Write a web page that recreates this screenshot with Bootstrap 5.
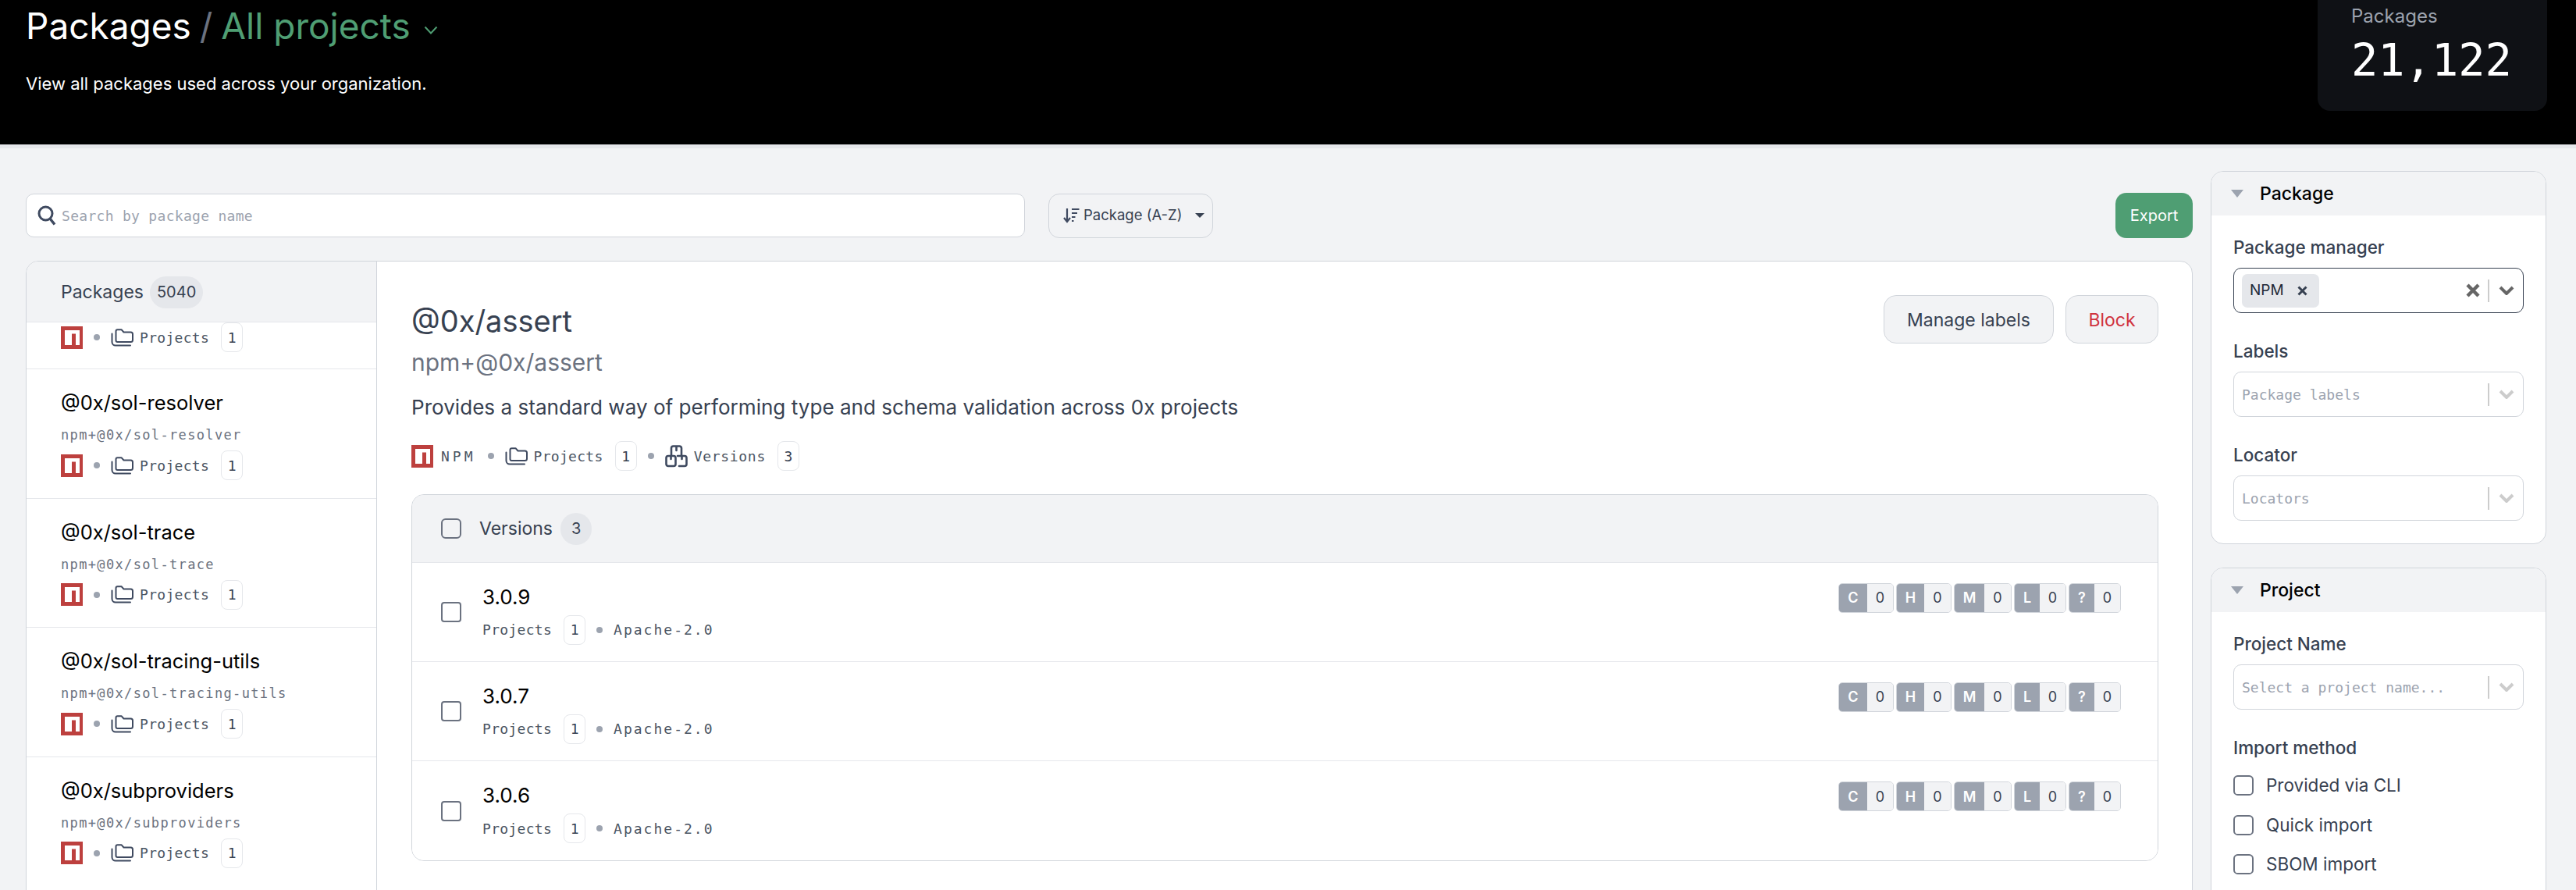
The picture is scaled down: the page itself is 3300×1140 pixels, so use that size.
<!doctype html>
<html lang="en">
<head>
<meta charset="utf-8">
<title>Packages</title>
<link href="https://cdn.jsdelivr.net/npm/bootstrap@5.3.0/dist/css/bootstrap.min.css" rel="stylesheet">
<style>
html,body{height:1140px;overflow:hidden}
body{background:#f2f3f5;font-family:Inter,"Liberation Sans",sans-serif;color:#374151}
.mono{font-family:"DejaVu Sans Mono",monospace;font-size:18px}
.top-band{height:190px;background:#000;border-bottom:5px solid #e5e7eb;padding:0 37px 0 33px}
.page-title{font-size:46px;line-height:66px;font-weight:400;color:#fff;margin:0}
.page-title .sep{color:#6b7280;margin:0 -2px}
.page-title .scope{color:#4f9e73}
.page-title svg{margin-left:17px;vertical-align:6px}
.page-sub{font-size:22px;line-height:32px;color:#fff;margin:25px 0 0}
.stat-box{width:294px;height:142px;background:#0f1115;border-radius:0 0 16px 16px;padding:2px 0 0 43px}
.stat-box .lbl{font-size:24px;line-height:38px;color:#9ca3af}
.stat-box .num{font-family:"DejaVu Sans Mono",monospace;font-size:57px;line-height:74px;color:#fff;font-weight:500}
.page-body{padding:0 38px 0 33px;gap:23px;height:950px;overflow:hidden}
.left-col{width:2776px;padding-top:57px}
.right-col{width:430px;padding-top:29px;gap:30px}
.toolbar{height:58px;margin-bottom:29px}
.search-box{width:1280px;height:56px;background:#fff;border:1px solid #d1d5db;border-radius:10px;padding-left:14px;gap:7px;color:#9ca3af;letter-spacing:.3px;margin-right:30px}
.sort-btn{height:57px;width:211px;background:#f2f3f5;border:1px solid #d1d5db;border-radius:14px;font-size:18.5px;color:#374151;padding:0 0 0 18px;gap:5px;display:flex;align-items:center}
.sort-btn::after{margin-left:12px;border-top-width:.35em;border-left-width:.35em;border-right-width:.35em;border-bottom:0}
.export-btn{height:58px;width:99px;background:#4f9e73;border:0;border-radius:14px;font-size:20px;color:#fff;padding:0}
.split{border:1px solid #d1d5db;border-radius:16px 16px 0 0;height:830px;overflow:hidden;background:#fff}
.pkg-list{width:449px;border-right:1px solid #d1d5db;flex-shrink:0}
.pkg-head{height:78px;background:#f2f3f5;border-bottom:1px solid #e5e7eb;padding:1px 0 0 44px;gap:8px;font-size:23px}
.count-pill{background:#e5e7eb;color:#374151;border-radius:21px;font-weight:400;font-size:20px;height:41px;padding:0 9px;display:inline-flex;align-items:center}
.pkg-row{height:165.67px;padding:26px 0 0 44px;border-color:#e5e7eb;border-width:0 0 1px;background:#fff}
.pkg-row.cut{height:60px;padding-top:0}
.pkg-row.cut .meta{margin-top:0}
.pkg-name{font-size:25.5px;line-height:34px;color:#000}
.pkg-id{color:#6b7280;font-size:17px;letter-spacing:1.35px;line-height:26px;margin-top:11px}
.meta{height:38px;gap:8px;color:#4b5563}
.pkg-row .meta{margin-top:7px}
.mini-count{width:28px;height:38px;border:1px solid #e5e7eb;border-radius:8px;display:inline-flex;align-items:center;justify-content:center;margin-left:7px;background:#fff;color:#374151;font-family:"DejaVu Sans Mono",monospace;font-size:18px}
.dotsep{width:8px;height:8px;border-radius:50%;background:#9ca3af;margin:0 6px;flex-shrink:0}
.lsp{letter-spacing:.3px}
.lsv{letter-spacing:.7px}
.lsn{letter-spacing:4px;margin-left:2px;margin-right:1px}
.detail{padding:0 43px 0 44px;min-width:0;flex:1}
.detail-top{padding-top:43px;height:149px}
.detail-name{font-size:38px;line-height:66px;color:#374151;font-weight:400;margin:0}
.detail-id{font-size:30px;line-height:40px;color:#6b7280}
.detail-actions{gap:15px}
.ghost-btn{height:62px;background:#f2f3f5;border:1px solid #d1d5db;border-radius:16px;font-size:23px;color:#374151;padding:2px 0 0;display:flex;align-items:center;justify-content:center}
.ghost-btn.w1{width:218px}
.ghost-btn.w2{width:119px;color:#d0333e}
.detail-desc{font-size:26.1px;line-height:36px;margin:20px 0 25px}
.vers-card{margin-top:30px;border:1px solid #d1d5db;border-radius:16px;overflow:hidden;background:#fff}
.vers-head{height:87px;background:#f2f3f5;border-bottom:1px solid #e5e7eb;padding-left:37px;font-size:23px}
.box{width:26px;height:26px;border:2px solid #6b7280;border-radius:4px;margin:0;flex-shrink:0;background-color:#fff}
.vers-head .box{margin-right:23px;background-color:#f2f3f5}
.vers-head .count-pill{margin-left:10px;padding:0 14px}
.vers-row{height:127px;border-color:#e5e7eb;border-width:0 0 1px;padding:0 47px 0 37px}
.vers-row:last-child{border-bottom:0}
.vers-row .box{margin-right:27px}
.vers-info{padding-top:4px}
.vers-no{font-size:26px;line-height:36px;color:#000}
.vers-row .meta{margin-top:5px}
.lic{letter-spacing:2px}
.sev-set{gap:3px;margin-top:-37px}
.sev{height:38px;border:1px solid #d1d5db;border-radius:5px;overflow:hidden;font-size:18px}
.sev b{background:#9ca3af;color:#fff;font-weight:600;display:flex;align-items:center;justify-content:center;height:100%}
.sev span{background:#f2f3f5;display:flex;align-items:center;justify-content:center;height:100%;flex:1;color:#374151}
.sev-c{width:71px}.sev-c b{width:36px}
.sev-h{width:71px}.sev-h b{width:35px}
.sev-m{width:74px}.sev-m b{width:38px}
.sev-l{width:67px}.sev-l b{width:32px}
.filter{border:1px solid #d1d5db;border-radius:16px;background:#fff;overflow:hidden;flex-shrink:0}
.filter-head{height:56px;padding-left:25px;background:#f2f3f5;border:0;border-radius:0;font-size:23px;font-weight:500;color:#000;gap:21px}
.filter-body{padding:24px 28px 29px}
.filter-label{font-size:22.5px;font-weight:500;line-height:34px;margin:0 0 9px;color:#374151}
.picker{height:58px;border:1px solid #d1d5db;border-radius:10px;padding:0 11px 0 10px;margin-bottom:32px;color:#9ca3af;background:#fff}
.picker.on{border-color:#374151}
.picker .ph{flex:1;white-space:nowrap}
.picker-sep{width:2px;height:29px;background:#ccc;margin:0 12px 0 10px}
.chip{height:43px;width:99px;background:#e5e7eb;border-radius:7px;font-size:19px;color:#1f2937;padding-left:10px;gap:17px}
.spacer{flex:1}
.check-list{margin-top:-3px}
.check-row{height:50.5px;font-size:22.5px;gap:16px;margin:0}
</style>
</head>
<body>
<svg width="0" height="0" class="position-absolute">
<symbol id="npm" viewBox="0 0 28 29"><rect width="28" height="29" fill="#bd403e"/><rect x="5" y="5" width="19" height="19" fill="#fff"/><rect x="14" y="9.5" width="5" height="14.5" fill="#bd403e"/></symbol>
<symbol id="folder" viewBox="0 0 29 23"><g fill="none" stroke="#3f4a60" stroke-width="2" stroke-linejoin="round" stroke-linecap="round"><path d="M6.5 3.2a2 2 0 0 1 2-2h5l3 3.3h9a2.5 2.5 0 0 1 2.5 2.5v7.5a2.5 2.5 0 0 1-2.5 2.500H8.500a2 2 0 0 1-2-2z"/><path d="M1.500 6.500V17a4.500 4.500 0 0 0 4.500 4.500h19"/></g></symbol>
<symbol id="boxes" viewBox="0 0 29 29"><g fill="none" stroke="#3f4a60" stroke-width="2.600" stroke-linejoin="round" stroke-linecap="round"><path d="M8 13V4a2.500 2.500 0 0 1 2.500-2.500h8A2.500 2.500 0 0 1 21 4v9M14.500 2v5"/><rect x="1.500" y="14" width="12" height="13" rx="2.500"/><path d="M16 14h9a2.500 2.500 0 0 1 2.500 2.500v8A2.500 2.500 0 0 1 25 27h-7M7.500 14v4M21.500 14v4"/></g></symbol>
<symbol id="chev" viewBox="0 0 20 12"><path d="M2 2l8 8 8-8" fill="none" stroke="currentColor" stroke-width="4"/></symbol>
</svg>

<header class="top-band d-flex justify-content-between">
  <div>
    <h1 class="page-title">Packages<span class="sep"> / </span><span class="scope">All projects</span><svg width="18" height="11" viewBox="0 0 18 11"><path d="M1.500 1.500L9 9.500l7.500-8" fill="none" stroke="#4f9e73" stroke-width="2"/></svg></h1>
    <p class="page-sub">View all packages used across your organization.</p>
  </div>
  <div class="stat-box">
    <div class="lbl">Packages</div>
    <div class="num">21,122</div>
  </div>
</header>

<main class="page-body d-flex">
  <div class="left-col">
    <div class="toolbar d-flex align-items-center">
      <div class="search-box d-flex align-items-center mono">
        <svg width="24" height="26" viewBox="0 0 24 26"><circle cx="10.500" cy="10.500" r="8.500" fill="none" stroke="#3f4a60" stroke-width="3"/><path d="M16 17l6 7.500" stroke="#3f4a60" stroke-width="3.500" fill="none"/></svg>
        <span>Search by package name</span>
      </div>
      <button type="button" class="btn sort-btn dropdown-toggle">
        <svg width="21" height="20" viewBox="0 0 21 20"><path d="M5 1v16M1 13l4 5 4-5" fill="none" stroke="#3f4a60" stroke-width="2.200"/><path d="M11 2h9.500M11 7h7M11 12h4.500M11 17h2.500" stroke="#3f4a60" stroke-width="2.200"/></svg>
        <span>Package (A-Z)</span>
      </button>
      <div class="spacer"></div>
      <button type="button" class="btn export-btn">Export</button>
    </div>

    <div class="split d-flex">
      <section class="pkg-list">
        <div class="pkg-head d-flex align-items-center"><span>Packages</span><span class="count-pill">5040</span></div>
        <div class="list-group list-group-flush">
          <div class="list-group-item pkg-row cut">
            <div class="meta d-flex align-items-center mono"><svg width="28" height="29"><use href="#npm"/></svg><span class="dotsep"></span><svg width="29" height="23"><use href="#folder"/></svg><span class="lsp">Projects</span><span class="mini-count">1</span></div>
          </div>
          <div class="list-group-item pkg-row">
            <div class="pkg-name">@0x/sol-resolver</div>
            <div class="pkg-id mono">npm+@0x/sol-resolver</div>
            <div class="meta d-flex align-items-center mono"><svg width="28" height="29"><use href="#npm"/></svg><span class="dotsep"></span><svg width="29" height="23"><use href="#folder"/></svg><span class="lsp">Projects</span><span class="mini-count">1</span></div>
          </div>
          <div class="list-group-item pkg-row">
            <div class="pkg-name">@0x/sol-trace</div>
            <div class="pkg-id mono">npm+@0x/sol-trace</div>
            <div class="meta d-flex align-items-center mono"><svg width="28" height="29"><use href="#npm"/></svg><span class="dotsep"></span><svg width="29" height="23"><use href="#folder"/></svg><span class="lsp">Projects</span><span class="mini-count">1</span></div>
          </div>
          <div class="list-group-item pkg-row">
            <div class="pkg-name">@0x/sol-tracing-utils</div>
            <div class="pkg-id mono">npm+@0x/sol-tracing-utils</div>
            <div class="meta d-flex align-items-center mono"><svg width="28" height="29"><use href="#npm"/></svg><span class="dotsep"></span><svg width="29" height="23"><use href="#folder"/></svg><span class="lsp">Projects</span><span class="mini-count">1</span></div>
          </div>
          <div class="list-group-item pkg-row">
            <div class="pkg-name">@0x/subproviders</div>
            <div class="pkg-id mono">npm+@0x/subproviders</div>
            <div class="meta d-flex align-items-center mono"><svg width="28" height="29"><use href="#npm"/></svg><span class="dotsep"></span><svg width="29" height="23"><use href="#folder"/></svg><span class="lsp">Projects</span><span class="mini-count">1</span></div>
          </div>
        </div>
      </section>

      <section class="detail">
        <div class="detail-top d-flex justify-content-between">
          <div>
            <h2 class="detail-name">@0x/assert</h2>
            <div class="detail-id">npm+@0x/assert</div>
          </div>
          <div class="detail-actions d-flex">
            <button type="button" class="btn ghost-btn w1">Manage labels</button>
            <button type="button" class="btn ghost-btn w2">Block</button>
          </div>
        </div>
        <p class="detail-desc">Provides a standard way of performing type and schema validation across 0x projects</p>
        <div class="meta d-flex align-items-center mono">
          <svg width="28" height="29"><use href="#npm"/></svg><span class="lsn">NPM</span><span class="dotsep"></span><svg width="29" height="23"><use href="#folder"/></svg><span class="lsp">Projects</span><span class="mini-count">1</span><span class="dotsep"></span><svg width="29" height="29"><use href="#boxes"/></svg><span class="lsv">Versions</span><span class="mini-count">3</span>
        </div>
        <div class="vers-card">
          <div class="vers-head d-flex align-items-center"><input class="form-check-input box" type="checkbox" aria-label="Select all"><span>Versions</span><span class="count-pill">3</span></div>
          <div class="list-group list-group-flush">
            <div class="list-group-item vers-row d-flex align-items-center">
              <input class="form-check-input box" type="checkbox" aria-label="3.0.9">
              <div class="vers-info flex-grow-1"><div class="vers-no">3.0.9</div><div class="meta d-flex align-items-center mono"><span class="lsp">Projects</span><span class="mini-count">1</span><span class="dotsep"></span><span class="lic">Apache-2.0</span></div></div>
              <div class="sev-set d-flex"><div class="sev sev-c d-flex align-items-center"><b>C</b><span>0</span></div><div class="sev sev-h d-flex align-items-center"><b>H</b><span>0</span></div><div class="sev sev-m d-flex align-items-center"><b>M</b><span>0</span></div><div class="sev sev-l d-flex align-items-center"><b>L</b><span>0</span></div><div class="sev sev-l d-flex align-items-center"><b>?</b><span>0</span></div></div>
            </div>
            <div class="list-group-item vers-row d-flex align-items-center">
              <input class="form-check-input box" type="checkbox" aria-label="3.0.7">
              <div class="vers-info flex-grow-1"><div class="vers-no">3.0.7</div><div class="meta d-flex align-items-center mono"><span class="lsp">Projects</span><span class="mini-count">1</span><span class="dotsep"></span><span class="lic">Apache-2.0</span></div></div>
              <div class="sev-set d-flex"><div class="sev sev-c d-flex align-items-center"><b>C</b><span>0</span></div><div class="sev sev-h d-flex align-items-center"><b>H</b><span>0</span></div><div class="sev sev-m d-flex align-items-center"><b>M</b><span>0</span></div><div class="sev sev-l d-flex align-items-center"><b>L</b><span>0</span></div><div class="sev sev-l d-flex align-items-center"><b>?</b><span>0</span></div></div>
            </div>
            <div class="list-group-item vers-row d-flex align-items-center">
              <input class="form-check-input box" type="checkbox" aria-label="3.0.6">
              <div class="vers-info flex-grow-1"><div class="vers-no">3.0.6</div><div class="meta d-flex align-items-center mono"><span class="lsp">Projects</span><span class="mini-count">1</span><span class="dotsep"></span><span class="lic">Apache-2.0</span></div></div>
              <div class="sev-set d-flex"><div class="sev sev-c d-flex align-items-center"><b>C</b><span>0</span></div><div class="sev sev-h d-flex align-items-center"><b>H</b><span>0</span></div><div class="sev sev-m d-flex align-items-center"><b>M</b><span>0</span></div><div class="sev sev-l d-flex align-items-center"><b>L</b><span>0</span></div><div class="sev sev-l d-flex align-items-center"><b>?</b><span>0</span></div></div>
            </div>
          </div>
        </div>
      </section>
    </div>
  </div>

  <aside class="right-col d-flex flex-column">
    <div class="filter">
      <div class="filter-head d-flex align-items-center"><svg width="16" height="10" viewBox="0 0 16 10"><path d="M0 0h16l-8 10z" fill="#9ca3af"/></svg><span>Package</span></div>
      <div class="filter-body">
        <div class="filter-label">Package manager</div>
        <div class="picker on d-flex align-items-center">
          <div class="chip d-flex align-items-center"><span>NPM</span><svg width="13" height="13" viewBox="0 0 13 13"><path d="M1.500 1.500l10 10M11.500 1.500l-10 10" stroke="#374151" stroke-width="3"/></svg></div>
          <div class="spacer"></div>
          <svg width="18" height="18" viewBox="0 0 18 18"><path d="M2 2l14 14M16 2L2 16" stroke="#666" stroke-width="4.500"/></svg>
          <span class="picker-sep"></span>
          <svg width="20" height="12" style="color:#666"><use href="#chev"/></svg>
        </div>
        <div class="filter-label">Labels</div>
        <div class="picker d-flex align-items-center"><span class="ph mono">Package labels</span><span class="picker-sep"></span><svg width="20" height="12" style="color:#ccc"><use href="#chev"/></svg></div>
        <div class="filter-label">Locator</div>
        <div class="picker d-flex align-items-center mb-0"><span class="ph mono">Locators</span><span class="picker-sep"></span><svg width="20" height="12" style="color:#ccc"><use href="#chev"/></svg></div>
      </div>
    </div>
    <div class="filter">
      <div class="filter-head d-flex align-items-center"><svg width="16" height="10" viewBox="0 0 16 10"><path d="M0 0h16l-8 10z" fill="#9ca3af"/></svg><span>Project</span></div>
      <div class="filter-body">
        <div class="filter-label">Project Name</div>
        <div class="picker d-flex align-items-center"><span class="ph mono">Select a project name...</span><span class="picker-sep"></span><svg width="20" height="12" style="color:#ccc"><use href="#chev"/></svg></div>
        <div class="filter-label">Import method</div>
        <div class="check-list">
          <div class="check-row d-flex align-items-center"><input class="form-check-input box" type="checkbox" aria-label="Provided via CLI"><span>Provided via CLI</span></div>
          <div class="check-row d-flex align-items-center"><input class="form-check-input box" type="checkbox" aria-label="Quick import"><span>Quick import</span></div>
          <div class="check-row d-flex align-items-center"><input class="form-check-input box" type="checkbox" aria-label="SBOM import"><span>SBOM import</span></div>
        </div>
      </div>
    </div>
  </aside>
</main>
</body>
</html>
